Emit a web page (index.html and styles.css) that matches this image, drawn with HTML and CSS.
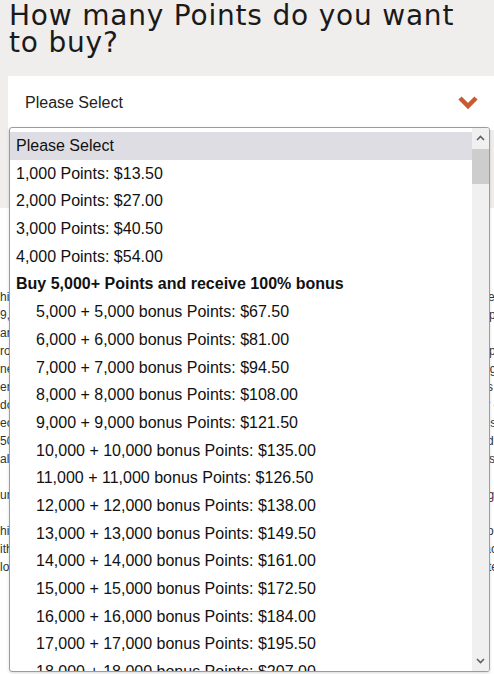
FILE: index.html
```html
<!DOCTYPE html>
<html lang="en">
<head>
    <meta charset="UTF-8">
    <meta name="viewport" content="width=device-width, initial-scale=1.0">
    <title>Buy Points</title>
    <link rel="stylesheet" href="styles.css">
</head>
<body>
    <div class="buy-panel">
        <h1>How many Points do you want to buy?</h1>
        <div class="select-box">
            <span class="select-value">Please Select</span>
            <svg class="chevron" width="20" height="14" viewBox="0 0 20 14">
                <polyline points="2,2 10,10 18,2" fill="none" stroke="#c85a32" stroke-width="4.5"/>
            </svg>
        </div>
    </div>

    <div class="terms">
        <p>his offer is valid for purchases of Points made between now and the end of the year when the site
            <br>9, 2024 the purchase limit is 160,000 Points per calendar year per account and is subject to p
            <br>are not refundable and do not count toward elite status qualification or lifetime tier status wit
            <br>ro Points purchased using this service are posted to the member account within 72 hours of purc
            <br>ne Points may not be transferred to another account once purchased through this service page
            <br>er purchase of Points is subject to the program terms and conditions that apply to the Honors c
            <br>do not use this service for any purpose other than personal redemption of Points for travel or c
            <br>ec Points will be charged in US dollars and taxes may apply depending on your country of reside
            <br>50 Points and more may be purchased at once with the bonus promotion applied for a limited time
            <br>ale of Points is processed by a third party on behalf of the program; please read the full terms h</p>
        <p>ur purchase will appear on your credit card statement as a charge from the Points processing vendor now</p>
        <p>his service is provided for the convenience of members and the program reserves the right to modify or
            <br>ith or without notice. All purchases are final. For questions about your purchase please contact b
            <br>lo Honors Customer Care or see the full program Terms and Conditions at the Honors website H</p>
    </div>

    <div class="dropdown">
        <ul class="options">
            <li class="option selected">Please Select</li>
            <li class="option">1,000 Points: $13.50</li>
            <li class="option">2,000 Points: $27.00</li>
            <li class="option">3,000 Points: $40.50</li>
            <li class="option">4,000 Points: $54.00</li>
            <li class="option group">Buy 5,000+ Points and receive 100% bonus</li>
            <li class="option sub">5,000 + 5,000 bonus Points: $67.50</li>
            <li class="option sub">6,000 + 6,000 bonus Points: $81.00</li>
            <li class="option sub">7,000 + 7,000 bonus Points: $94.50</li>
            <li class="option sub">8,000 + 8,000 bonus Points: $108.00</li>
            <li class="option sub">9,000 + 9,000 bonus Points: $121.50</li>
            <li class="option sub">10,000 + 10,000 bonus Points: $135.00</li>
            <li class="option sub">11,000 + 11,000 bonus Points: $126.50</li>
            <li class="option sub">12,000 + 12,000 bonus Points: $138.00</li>
            <li class="option sub">13,000 + 13,000 bonus Points: $149.50</li>
            <li class="option sub">14,000 + 14,000 bonus Points: $161.00</li>
            <li class="option sub">15,000 + 15,000 bonus Points: $172.50</li>
            <li class="option sub">16,000 + 16,000 bonus Points: $184.00</li>
            <li class="option sub">17,000 + 17,000 bonus Points: $195.50</li>
            <li class="option sub">18,000 + 18,000 bonus Points: $207.00</li>
        </ul>
        <div class="scrollbar">
            <svg class="arrow" width="17" height="21" viewBox="0 0 17 21">
                <polyline points="5,12 8.5,8.5 12,12" fill="none" stroke="#606060" stroke-width="1.6"/>
            </svg>
            <div class="thumb"></div>
            <svg class="arrow down" width="17" height="21" viewBox="0 0 17 21">
                <polyline points="5,9 8.5,12.5 12,9" fill="none" stroke="#606060" stroke-width="1.6"/>
            </svg>
        </div>
    </div>
</body>
</html>
```

FILE: styles.css
```css
body {
    margin: 0;
    background-color: #fff;
    font-family: "Liberation Sans", Arial, sans-serif;
    overflow: hidden;
    height: 674px;
    position: relative;
}
.buy-panel {
    background-color: #efeeec;
    padding: 0 0 0 8px;
    height: 208px;
    box-sizing: border-box;
}
.buy-panel h1 {
    margin: 0;
    padding: 2px 0 0 1px;
    max-width: 465px;
    font-family: "DejaVu Sans", sans-serif;
    font-weight: normal;
    font-size: 28px;
    line-height: 27px;
    letter-spacing: 0.8px;
    color: #1a1a1a;
    height: 74px;
}
.select-box {
    background-color: #fff;
    height: 54px;
    display: flex;
    align-items: center;
    justify-content: space-between;
    padding: 0 16px 0 17px;
}
.select-value {
    font-size: 16px;
    color: #222;
}
.terms {
    padding-top: 80px;
    font-family: "Liberation Sans", Arial, sans-serif;
    font-size: 12px;
    line-height: 18px;
    color: #333;
    white-space: nowrap;
    overflow: hidden;
}
.terms p {
    margin: 0 0 18px 0;
}
.dropdown {
    position: absolute;
    left: 9px;
    top: 127px;
    width: 481px;
    height: 545px;
    border: 1px solid #9c9c9c;
    border-radius: 3px;
    box-sizing: border-box;
    background-color: #fff;
    box-shadow: 0 1px 3px rgba(0, 0, 0, 0.15);
    overflow: hidden;
    display: flex;
}
.options {
    list-style: none;
    margin: 0;
    padding: 4px 0 0 0;
    flex: 1;
}
.option {
    height: 27.7px;
    line-height: 27.7px;
    padding-left: 6px;
    font-size: 16px;
    color: #111;
    white-space: nowrap;
}
.option.selected {
    background-color: #dddde3;
}
.option.group {
    font-weight: bold;
}
.option.sub {
    padding-left: 26px;
}
.scrollbar {
    width: 17px;
    background-color: #f0f0f0;
    display: flex;
    flex-direction: column;
}
.scrollbar .arrow {
    display: block;
}
.scrollbar .arrow.down {
    margin-top: auto;
}
.thumb {
    width: 17px;
    height: 35px;
    background-color: #cdcdcd;
}
```
